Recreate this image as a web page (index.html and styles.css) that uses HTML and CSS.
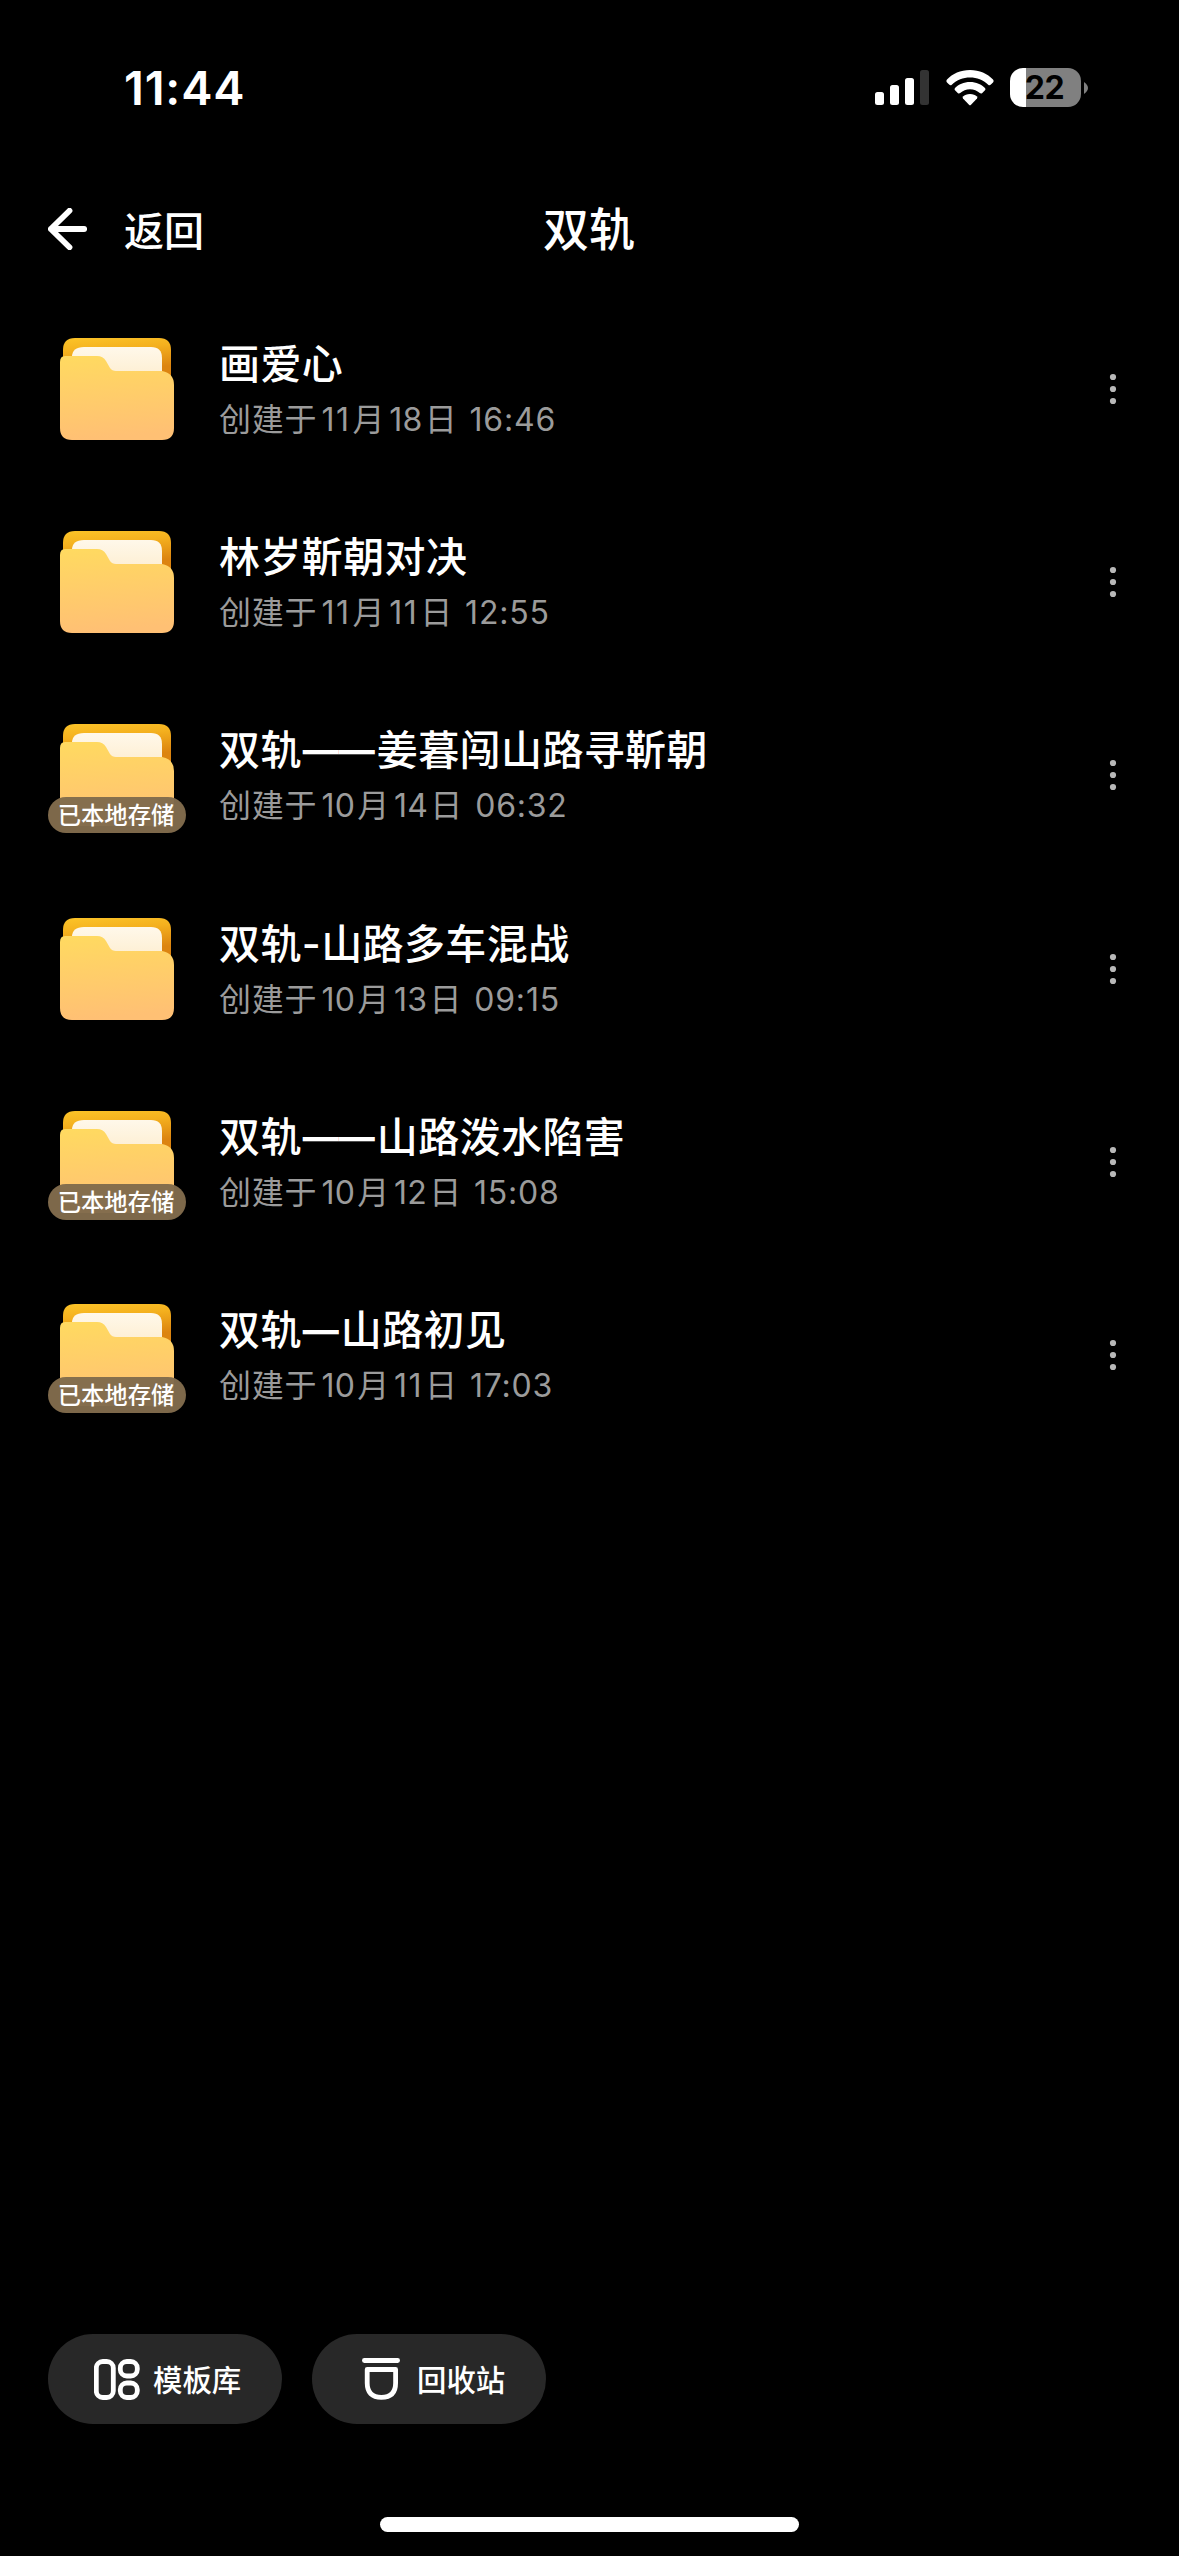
FILE: index.html
```html
<!DOCTYPE html>
<html lang="zh-CN">
<head>
<meta charset="utf-8">
<title>双轨</title>
<link rel="stylesheet" href="styles.css">
</head>
<body>
<svg class="defs" aria-hidden="true">
  <defs>
    <linearGradient id="back" x1="0" y1="0" x2="0.15" y2="1"><stop offset="0" stop-color="#fcc428"/><stop offset="0.25" stop-color="#f4b01e"/><stop offset="0.6" stop-color="#dc8410"/><stop offset="1" stop-color="#dc8410"/></linearGradient>
    <linearGradient id="paper" x1="0" y1="0" x2="0" y2="1"><stop offset="0" stop-color="#fff8ea"/><stop offset="1" stop-color="#fdeccc"/></linearGradient>
    <linearGradient id="front" x1="0" y1="0" x2="0.1" y2="1"><stop offset="0" stop-color="#ffda60"/><stop offset="1" stop-color="#ffc074"/></linearGradient>
    <symbol id="folder" viewBox="0 0 114 102">
      <path d="M3 30V12Q3 0 15 0H99Q111 0 111 12V60H3Z" fill="url(#back)"/>
      <path d="M12 30V19Q12 9 24 9H91Q102 9 102 20V45H12Z" fill="url(#paper)"/>
      <path d="M0 24Q0 18 5 18H37Q43 18 46 23L50 30Q52 33 56 33H102Q114 35 114 47V90Q114 102 102 102H12Q0 102 0 90Z" fill="url(#front)"/>
    </symbol>
    <symbol id="more" viewBox="0 0 8 32"><circle cx="4" cy="4" r="3.1"/><circle cx="4" cy="16" r="3.1"/><circle cx="4" cy="28" r="3.1"/></symbol>
  </defs>
</svg>
<div class="screen">
  <div class="status">
    <div class="time">11:44</div>
    <div class="indicators">
      <svg class="signal" viewBox="0 0 54 35"><rect y="22" width="9" height="13" rx="2.5"/><rect x="15" y="15" width="9" height="20" rx="2.5"/><rect x="30" y="8" width="9" height="27" rx="2.5"/><rect x="45" y="0" width="9" height="35" rx="2.5" fill="#333"/></svg>
      <svg class="wifi" viewBox="0 0 48 36"><path d="M24 0C33.5 0 41.500 3.800 47 9.500Q48.200 11 47 12.400L44.600 14.800Q43.400 15.700 42.200 14.700C37 10 31 7.500 24 7.500S11 10 5.800 14.700Q4.600 15.700 3.400 14.800L1 12.400Q-.2 11 1 9.500C6.500 3.800 14.500 0 24 0Z"/><path d="M24 12C30.200 12 35.500 14.500 39 18Q40 19.200 39 20.300L36 23.200Q35 24 33.800 23.100C31 20.500 28 19.200 24 19.200S17 20.500 14.200 23.100Q13 24 12 23.200L9 20.300Q8 19.200 9 18C12.500 14.500 17.800 12 24 12Z"/><path d="M24 24C27 24 29.400 25 31 26.600Q31.800 27.500 31 28.400L25 34.700Q24 35.700 23 34.700L17 28.400Q16.200 27.500 17 26.600C18.600 25 21 24 24 24Z"/></svg>
      <div class="power"><div class="battery"><span>22</span></div><svg class="nub" viewBox="0 0 4 12"><path d="M0 0Q4 3 4 6T0 12Z"/></svg></div>
    </div>
  </div>
  <header class="nav">
    <div class="back">
      <svg class="arrow" viewBox="0 0 39 42"><path d="M21.500 2.700 2.800 21 21.500 39.300M3 21H36.200"/></svg>
      <span>返回</span>
    </div>
    <h1>双轨</h1>
  </header>
  <main class="list">
    <div class="row"><div class="thumb"><svg class="folder"><use href="#folder"/></svg></div><div class="info"><div class="name">画爱心</div><div class="meta">创建于<b class="ones">11</b>月<b>18</b>日<i>16:46</i></div></div><svg class="more"><use href="#more"/></svg></div>
    <div class="row"><div class="thumb"><svg class="folder"><use href="#folder"/></svg></div><div class="info"><div class="name">林岁靳朝对决</div><div class="meta">创建于<b class="ones">11</b>月<b class="ones">11</b>日<i>12:55</i></div></div><svg class="more"><use href="#more"/></svg></div>
    <div class="row"><div class="thumb"><svg class="folder"><use href="#folder"/></svg><span class="tag">已本地存储</span></div><div class="info"><div class="name">双轨<span class="dash">——</span>姜暮闯山路寻靳朝</div><div class="meta">创建于<b>10</b>月<b>14</b>日<i>06:32</i></div></div><svg class="more"><use href="#more"/></svg></div>
    <div class="row"><div class="thumb"><svg class="folder"><use href="#folder"/></svg></div><div class="info"><div class="name">双轨<span class="hyphen">-</span>山路多车混战</div><div class="meta">创建于<b>10</b>月<b>13</b>日<i>09:15</i></div></div><svg class="more"><use href="#more"/></svg></div>
    <div class="row"><div class="thumb"><svg class="folder"><use href="#folder"/></svg><span class="tag">已本地存储</span></div><div class="info"><div class="name">双轨<span class="dash">——</span>山路泼水陷害</div><div class="meta">创建于<b>10</b>月<b>12</b>日<i>15:08</i></div></div><svg class="more"><use href="#more"/></svg></div>
    <div class="row"><div class="thumb"><svg class="folder"><use href="#folder"/></svg><span class="tag">已本地存储</span></div><div class="info"><div class="name">双轨<span class="dash">—</span>山路初见</div><div class="meta">创建于<b>10</b>月<b class="ones">11</b>日<i>17:03</i></div></div><svg class="more"><use href="#more"/></svg></div>
  </main>
  <footer class="actions">
    <div class="pill"><svg class="grid-icon" viewBox="0 0 46 41"><rect x="2.300" y="2.500" width="17" height="36" rx="6.500"/><rect x="26.300" y="2.500" width="17" height="14.500" rx="6.500"/><rect x="26.300" y="24" width="17" height="14.500" rx="6.500"/></svg><span>模板库</span></div>
    <div class="pill bin"><svg class="bin-icon" viewBox="0 0 38 42"><path d="M2.400 2.500H35.600M5.200 11.500H33.600V25Q33.600 39.300 19.400 39.300T5.200 25Z"/></svg><span>回收站</span></div>
  </footer>
  <div class="home"></div>
</div>
</body>
</html>
```
FILE: styles.css
```css
* { box-sizing: border-box; }
body { margin: 0; background: #000; }
.defs { position: absolute; width: 0; height: 0; }
.screen {
  width: 1179px; height: 2556px; overflow: hidden;
  display: flex; flex-direction: column;
  background: #000; color: #fff;
  font-family: "Noto Sans CJK SC", sans-serif; font-weight: 500;
}
svg { display: block; flex: none; fill: #fff; }
.status { height: 176px; padding: 0 91px 0 124px; display: flex; justify-content: space-between; }
.time { margin-top: 58px; font: 600 47px/60px Inter, sans-serif; letter-spacing: 0.8px; }
.indicators { height: 39px; margin-top: 68px; display: flex; align-items: center; }
.signal { width: 54px; height: 35px; margin-right: 17px; }
.wifi { width: 48px; height: 36px; margin-right: 16px; }
.power { display: flex; align-items: center; gap: 3px; }
.battery {
  width: 71px; height: 39px; border-radius: 13px; overflow: hidden;
  background: linear-gradient(90deg, #fff 16px, #808080 16px);
  color: #000; font: 700 32px/39px Inter, sans-serif; text-align: center; letter-spacing: -0.5px; padding-right: 2px;
}
.nub { width: 4px; height: 12px; fill: #808080; }
.nav { height: 106px; padding: 0 48px; display: grid; grid-template-columns: 1fr auto 1fr; align-items: center; }
.back { display: flex; align-items: center; gap: 37px; font-size: 40px; line-height: 56px; }
.arrow { width: 39px; height: 42px; fill: none; stroke: #fff; stroke-width: 5.8; stroke-linecap: round; stroke-linejoin: round; }
h1 { margin: 0 1px 7px 0; font-size: 46px; line-height: 60px; font-weight: 500; }
.list { flex: 1; padding: 10.5px 62px 0 48px; }
.row { height: 193.200px; display: flex; align-items: center; }
.thumb { width: 138px; height: 102px; position: relative; display: flex; justify-content: center; flex: none; }
.folder { width: 114px; height: 102px; }
.tag {
  position: absolute; left: 0; top: 73px; width: 138px; height: 36px; border-radius: 18px;
  background: rgba(129, 107, 76, 0.97); text-align: center; font-size: 23.300px; line-height: 34px; white-space: nowrap; padding-right: 2px;
}
.info { flex: 1; margin: 1px 0 0 33px; }
.name { height: 55px; font-size: 41px; line-height: 54px; letter-spacing: 0.4px; white-space: nowrap; }
.dash, .hyphen { font-family: Inter, sans-serif; line-height: 1; }
.dash { font-size: 36px; letter-spacing: 0; font-weight: 700; margin: 0 2px 0 1px; vertical-align: 2px; }
.meta { display: flex; align-items: baseline; height: 56px; font-size: 32px; line-height: 56px; font-weight: 400; color: #9b9b9b; letter-spacing: 0.800px; white-space: nowrap; }
.meta b, .meta i { font-family: Inter, sans-serif; font-weight: 400; font-style: normal; }
.meta b { margin: 0 2px 0 4px; letter-spacing: 0.3px; }
.meta .ones { letter-spacing: 1.500px; }
.meta i { margin-left: 12px; }
.more { width: 8px; height: 32px; fill: #b8b8b8; }
.actions { display: flex; gap: 30px; padding-left: 48px; height: 90px; }
.pill { width: 234px; height: 90px; padding-left: 46px; border-radius: 45px; background: #282828; display: flex; align-items: center; gap: 13px; font-size: 29.400px; line-height: 44px; }
.pill span { margin-bottom: 2px; }
.grid-icon { width: 46px; height: 41px; fill: none; stroke: #fff; stroke-width: 4.800; }
.bin { padding-left: 50px; gap: 17px; }
.bin-icon { width: 38px; height: 42px; fill: none; stroke: #fff; stroke-width: 4.800; stroke-linecap: round; stroke-linejoin: round; }
.home { width: 419px; height: 15px; margin: 93px auto 24px; border-radius: 8px; background: #fff; }
```
